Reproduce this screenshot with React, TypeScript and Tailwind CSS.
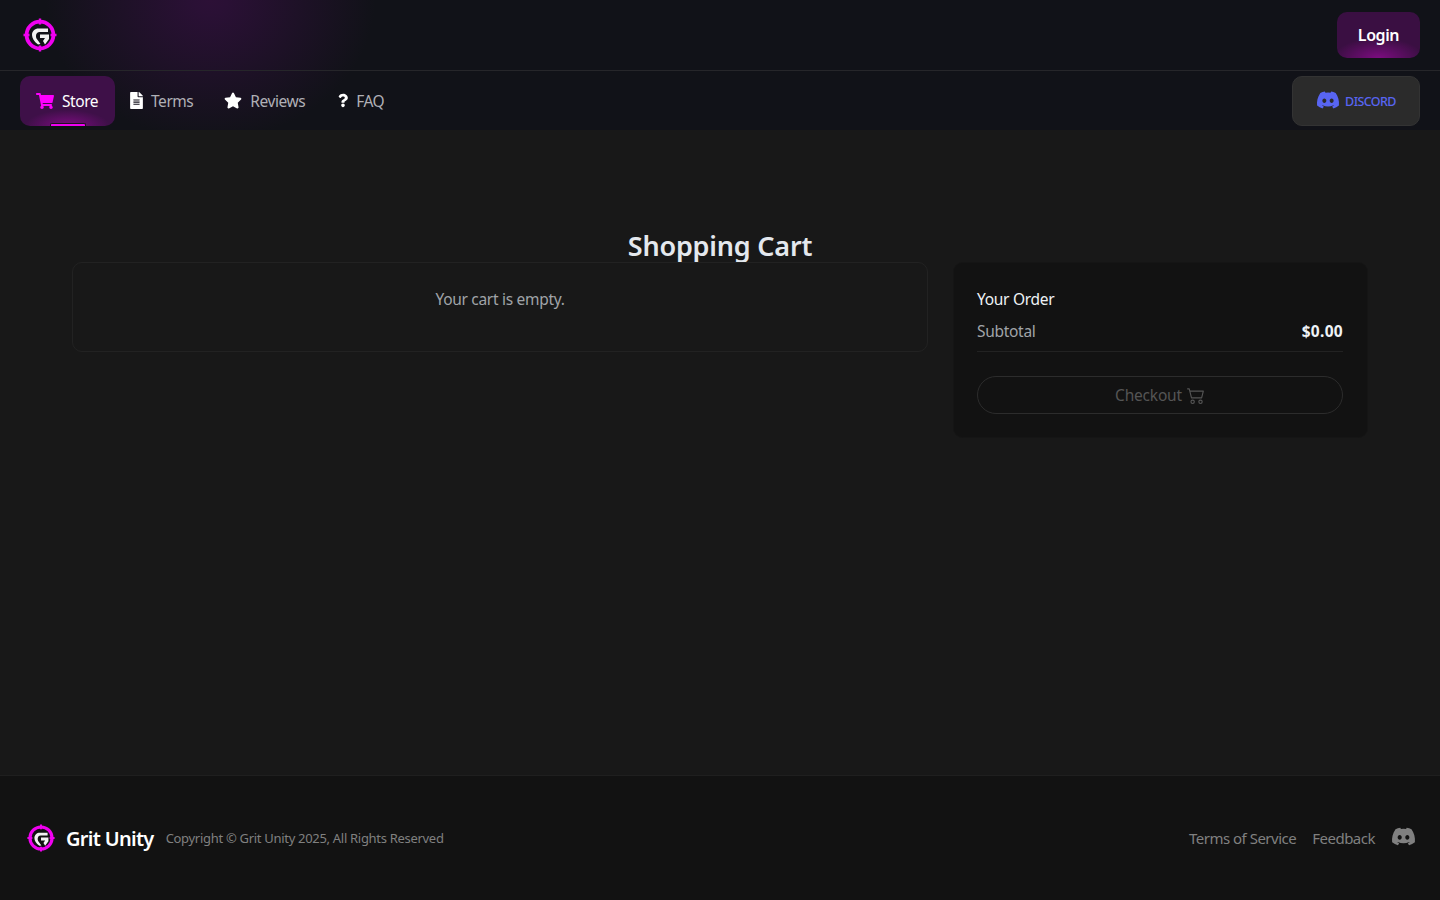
import React from 'react';
import { FaShoppingCart, FaFileAlt, FaStar, FaQuestion, FaDiscord } from 'react-icons/fa';
import { BsCart2 } from 'react-icons/bs';

const Logo: React.FC<{ size: number }> = ({ size }) => (
  <svg width={size} height={size} viewBox="0 0 34 34" fill="none">
    <circle cx="17" cy="17" r="13.4" stroke="#f000f0" strokeWidth="3.8" />
    <path d="M17 0.5V6.5M17 27.5V33.5M0.5 17H6.5M27.5 17H33.5" stroke="#f000f0" strokeWidth="2.4" />
    <path d="M25 10.5H15.5C12 10.5 9 13 9 17C9 20 11 23.5 15 26.5L17.5 26L13.5 20.5C12.5 18 13 14 16.5 14H25Z" fill="#f2f2f2" />
    <path d="M17 16.5H26V21L22 26.5L20 23L22 20H17Z" fill="#f2f2f2" />
  </svg>
);

const navItems = [
  { label: 'Terms', width: 'w-[13px]', shift: '', icon: <FaFileAlt size={17} /> },
  { label: 'Reviews', width: 'w-[18px]', shift: '-ml-[1px] mr-[1px]', icon: <FaStar size={19} /> },
  { label: 'FAQ', width: 'w-[10px]', shift: '', icon: <FaQuestion size={15} /> },
];

export default function App() {
  return (
    <div className="min-h-[900px] flex flex-col bg-[#181818] text-white font-['Noto_Sans','Open_Sans',sans-serif]">
      {/* Header */}
      <header className="bg-[#111218] bg-[radial-gradient(ellipse_165px_140px_at_210px_0px,#2c1036_0%,#2a1035_10%,#111218_100%)]">
        <div className="h-[71px] flex items-center justify-between pl-[23px] pr-5 border-b border-[#26262a]">
          <Logo size={34} />
          <button className="w-[83px] h-[46px] rounded-[10px] text-[16px] font-semibold tracking-[-0.4px] bg-[#3d1047] bg-[radial-gradient(ellipse_45px_20px_at_50%_100%,#7c0c80_0%,#3a0f42_100%)]">
            Login
          </button>
        </div>
        <nav className="h-[59px] flex items-center justify-between pl-5 pr-5">
          <div className="flex items-center text-[15.5px] tracking-[-0.45px] text-[#b0b0b6]">
            <a className="relative w-[95px] h-[50px] rounded-[10px] flex items-center gap-2 pl-4 mr-[15px] text-white bg-[#3e1048] bg-[radial-gradient(ellipse_42px_16px_at_50%_100%,#7c0c80_0%,#3e1048_100%)]">
              <FaShoppingCart size={18} className="text-[#ff00ff]" />
              <span className="pt-[2px]">Store</span>
              <span className="absolute left-[30px] bottom-0 w-[36px] h-[3px] rounded-t-[2px] bg-[#f000f0] border-t border-x border-[#1c1420]" />
            </a>
            <div className="flex items-center gap-8">
              {navItems.map(item => (
                <a key={item.label} className={`${item.shift} flex items-center gap-[8px]`}>
                  <span className={`${item.width} flex justify-center text-white`}>{item.icon}</span>
                  <span className="pt-[2px]">{item.label}</span>
                </a>
              ))}
            </div>
          </div>
          <a className="w-[128px] h-[50px] rounded-[10px] bg-[#2b2b2b] border border-[#333] flex items-center justify-center gap-[5px] text-[#5865f2] text-[12.5px] font-medium tracking-[-0.6px]">
            <FaDiscord size={24} className="mb-[1px]" />
            <span className="pt-[3px]">DISCORD</span>
          </a>
        </nav>
      </header>

      {/* Cart */}
      <main className="flex-1 pt-[99px] px-[72px]">
        <h1 className="text-center text-[27px] leading-[33px] font-semibold tracking-[-0.2px] text-[#e4e8ee]">Shopping Cart</h1>
        <div className="flex items-start gap-[25px]">
          <section className="w-[856px] h-[90px] rounded-[10px] border border-[#222] pt-[24px] text-center text-[15.5px] leading-[24px] tracking-[-0.3px] text-[#a0a4a8]">
            Your cart is empty.
          </section>
          <aside className="w-[415px] h-[176px] rounded-[10px] border border-[#151515] bg-[#121212] pl-[23px] pr-[23px] pt-[24px]">
            <h2 className="text-[15.5px] leading-[24px] tracking-[-0.3px] text-[#eef2f6]">Your Order</h2>
            <div className="flex justify-between mt-2 pb-2 mr-[1px] border-b border-[#222] leading-[24px] text-[15.5px] tracking-[-0.3px]">
              <span className="text-[#a0a4a8]">Subtotal</span>
              <span className="font-bold tracking-[0.3px] text-[#eef2f6]">$0.00</span>
            </div>
            <button className="w-[366px] h-[38px] mt-6 rounded-full border border-[#2c2c2c] flex items-center justify-center gap-[5px] text-[15.5px] tracking-[-0.2px] text-[#555]">
              <span className="pt-[2px]">Checkout</span> <BsCart2 size={18} />
            </button>
          </aside>
        </div>
      </main>

      {/* Footer */}
      <footer className="h-[125px] bg-[#121212] border-t border-[#1f1f1f] flex items-center justify-between pl-[27px] pr-[24px]">
        <div className="flex items-center">
          <Logo size={28} />
          <span className="ml-[11px] pt-[2px] text-[20px] font-semibold tracking-[-0.7px]">Grit Unity</span>
          <span className="ml-3 pt-[2px] text-[13px] tracking-[-0.3px] text-[#808080]">Copyright © Grit Unity 2025, All Rights Reserved</span>
        </div>
        <div className="flex items-center gap-4 text-[15px] tracking-[-0.5px] text-[#808080]">
          <a>Terms of Service</a>
          <a>Feedback</a>
          <FaDiscord size={25} className="mb-[3px]" />
        </div>
      </footer>
    </div>
  );
}
